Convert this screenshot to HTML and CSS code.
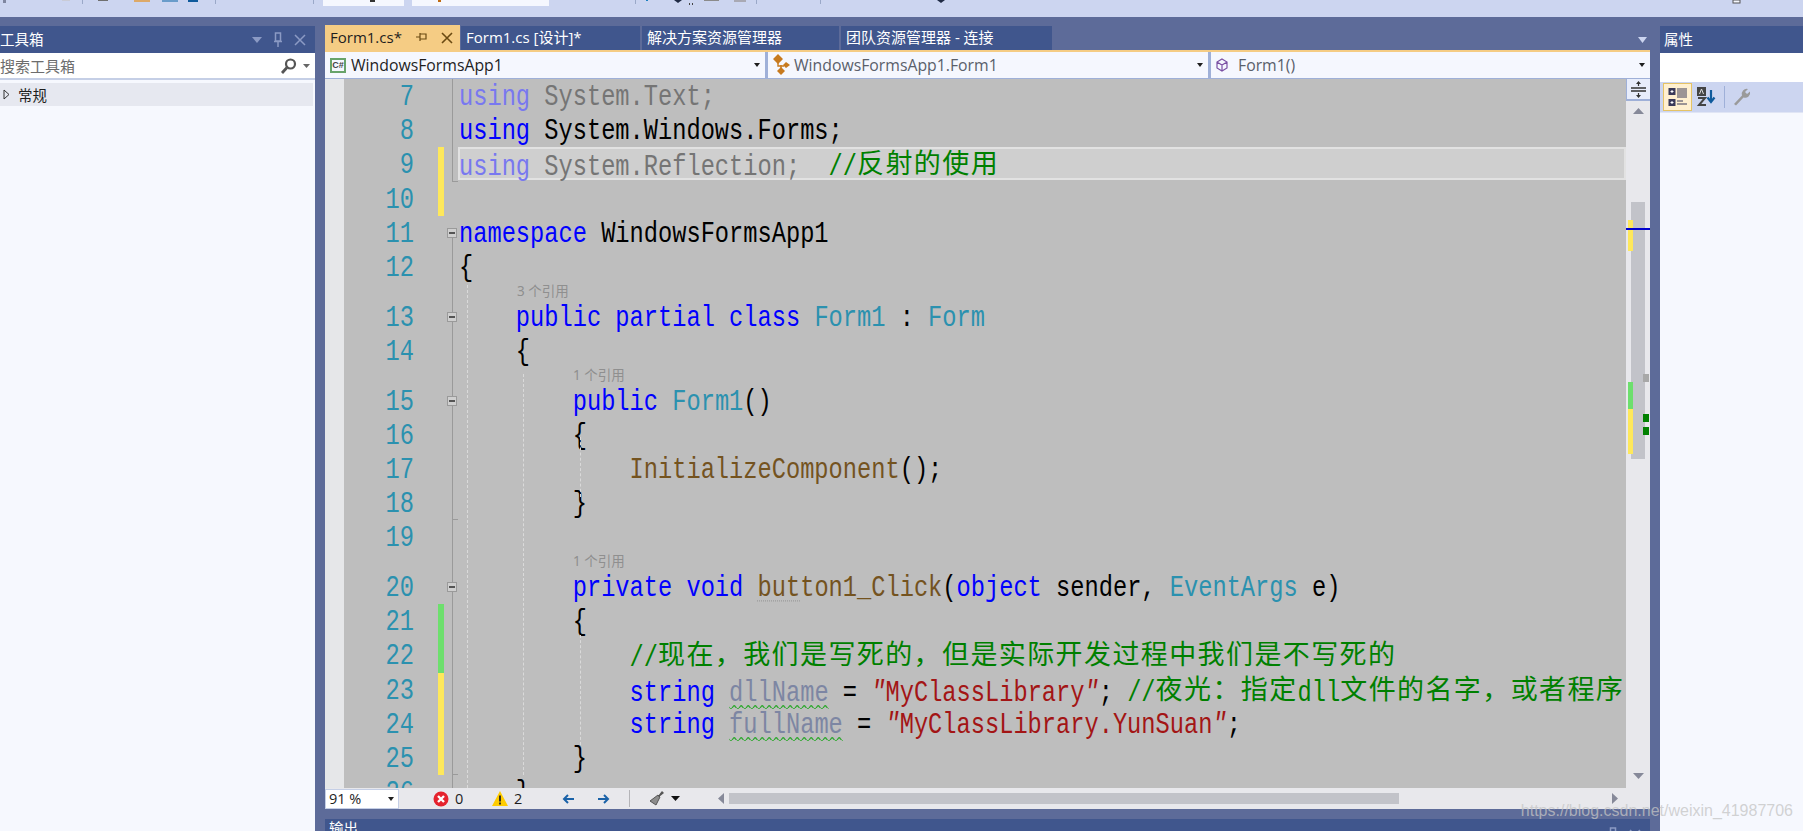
FILE: index.html
```html
<!DOCTYPE html>
<html lang="zh">
<head>
<meta charset="utf-8">
<title>Form1.cs</title>
<link rel="stylesheet" href="styles.css">
</head>
<body>
<header class="toolbar">
  <svg class="toolbar-art" width="1803" height="17" viewBox="0 0 1803 17">
    <rect x="3" y="0" width="3" height="3" fill="#7f86a0"/>
    <rect x="62" y="0" width="8" height="1" fill="#c9cbd6"/>
    <rect x="82" y="0" width="1" height="4" fill="#9aa8c8"/>
    <rect x="98" y="0" width="10" height="1" fill="#6f6f6f"/>
    <rect x="134" y="0" width="16" height="2" fill="#dda968"/>
    <rect x="162" y="0" width="16" height="2" fill="#6a9cca"/>
    <rect x="188" y="0" width="10" height="2" fill="#0e5a9c"/>
    <rect x="215" y="0" width="1" height="4" fill="#9aa8c8"/>
    <rect x="313" y="0" width="1" height="4" fill="#9aa8c8"/>
    <rect x="323" y="0" width="81" height="6" fill="#f5f7fe"/>
    <rect x="370" y="0" width="5" height="2" fill="#333"/>
    <rect x="412" y="0" width="137" height="6" fill="#f5f7fe"/>
    <rect x="438" y="0" width="3" height="2" fill="#c06a10"/>
    <rect x="635" y="0" width="1" height="4" fill="#9aa8c8"/>
    <rect x="646" y="0" width="2" height="1" fill="#1a7fc0"/>
    <polygon points="674,0 682,0 678,3" fill="#1f2a44"/>
    <rect x="689" y="3" width="1" height="2" fill="#444"/>
    <rect x="692" y="3" width="1" height="2" fill="#444"/>
    <rect x="704" y="0" width="15" height="1" fill="#8b8b8b"/>
    <rect x="734" y="0" width="12" height="2" fill="#a9a9b4"/>
    <rect x="756" y="0" width="1" height="4" fill="#9aa8c8"/>
    <rect x="820" y="0" width="1" height="4" fill="#9aa8c8"/>
    <polygon points="937,0 945,0 941,3" fill="#1f2a44"/>
    <rect x="1733" y="0" width="7" height="3" fill="#f5f7fe" stroke="#555"/>
  </svg>
</header>

<main class="workspace">
  <aside class="panel toolbox">
    <div class="panel-head">
      <span class="panel-title">工具箱</span>
      <span class="panel-tools">
        <svg width="10" height="6" viewBox="0 0 10 6"><polygon points="0,0 10,0 5,6" fill="#8b9ac4"/></svg>
        <svg width="10" height="16" viewBox="0 0 10 16"><path d="M2.5 1h5v8h-5zM1 9.500h8M5 10v5" fill="none" stroke="#8b9ac4" stroke-width="1.500"/></svg>
        <svg width="12" height="12" viewBox="0 0 12 12"><path d="M1 1l10 10M11 1L1 11" stroke="#8b9ac4" stroke-width="1.500"/></svg>
      </span>
    </div>
    <div class="search">
      <span class="search-text">搜索工具箱</span>
      <svg width="17" height="16" viewBox="0 0 17 16"><circle cx="10.500" cy="6" r="4.500" fill="none" stroke="#555" stroke-width="2.200"/><path d="M7 9.500L2 15" stroke="#555" stroke-width="2.800"/></svg>
      <svg width="7" height="4" viewBox="0 0 7 4"><polygon points="0,0 7,0 3.500,4" fill="#666"/></svg>
    </div>
    <div class="tree-row">
      <svg width="7" height="11" viewBox="0 0 7 11"><polygon points="1,1 6,5.500 1,10" fill="none" stroke="#333"/></svg>
      <span>常规</span>
    </div>
  </aside>

  <section class="center">
    <nav class="tabs">
      <div class="tab active"><span class="tab-label">Form1.cs*</span>
        <svg width="13" height="11" viewBox="0 0 13 11"><path d="M5 2h6v5H5zM5 1v8M1 5h4" fill="none" stroke="#6b4a12" stroke-width="1.200"/></svg>
        <svg width="12" height="12" viewBox="0 0 12 12"><path d="M1 1l10 10M11 1L1 11" stroke="#6b4a12" stroke-width="1.600"/></svg>
      </div>
      <div class="tab t2">Form1.cs [设计]*</div>
      <div class="tab t3">解决方案资源管理器</div>
      <div class="tab t4">团队资源管理器 - 连接</div>
      <svg class="tabs-more" width="9" height="6" viewBox="0 0 9 6"><polygon points="0,0 9,0 4.500,6" fill="#ccd5f0"/></svg>
    </nav>
    <div class="navbar">
      <div class="combo c1">
        <span class="cs-icon">C#</span>
        <span class="combo-text dark">WindowsFormsApp1</span>
        <span class="combo-arrow"></span>
      </div>
      <div class="combo c2">
        <svg width="18" height="22" viewBox="0 0 18 22"><path d="M0 5l5-5 5 5-5 5zM10 11l3-3 4 3-4 3zM4 17l4-4 4 4-4 4z" fill="#c77a1e"/><path d="M5 9v3h6M8 14V11" fill="none" stroke="#c77a1e" stroke-width="1.400"/></svg>
        <span class="combo-text">WindowsFormsApp1.Form1</span>
        <span class="combo-arrow"></span>
      </div>
      <div class="combo c3">
        <svg width="12" height="14" viewBox="0 0 12 14"><path d="M6 1l5 3v6l-5 3-5-3V4zM1 4l5 3 5-3M6 7v6" fill="none" stroke="#7a4fa3" stroke-width="1.200"/></svg>
        <span class="combo-text">Form1()</span>
        <span class="combo-arrow"></span>
      </div>
    </div>

    <div class="editor">
      <div class="lines">
        <div class="row"><span class="num"><span class="src">7</span></span><span class="bar"></span><span class="fold ln"></span><span class="code"><span class="src"><span class="kf">using</span> <span class="gf">System.Text;</span></span></span></div>
        <div class="row"><span class="num"><span class="src">8</span></span><span class="bar"></span><span class="fold ln"></span><span class="code"><span class="src"><span class="k">using</span> System.Windows.Forms;</span></span></div>
        <div class="row"><span class="num"><span class="src">9</span></span><span class="bar y"></span><span class="fold ln end"></span><span class="code hl"><span class="src"><span class="kf">using</span> <span class="gf">System.Reflection;</span>  <span class="c">//</span></span><span class="cj">反射的使用</span></span></div>
        <div class="row"><span class="num"><span class="src">10</span></span><span class="bar y"></span><span class="fold"></span><span class="code"></span></div>
        <div class="row"><span class="num"><span class="src">11</span></span><span class="bar"></span><span class="fold box below"><i></i></span><span class="code"><span class="src"><span class="k">namespace</span> WindowsFormsApp1</span></span></div>
        <div class="row"><span class="num"><span class="src">12</span></span><span class="bar"></span><span class="fold ln"></span><span class="code"><span class="src">{</span></span></div>
        <div class="row lens-row"><span class="num"></span><span class="bar"></span><span class="fold ln"></span><span class="code lens l1">3 个引用</span></div>
        <div class="row"><span class="num"><span class="src">13</span></span><span class="bar"></span><span class="fold box ln"><i></i></span><span class="code"><span class="src">    <span class="k">public partial class</span> <span class="t">Form1</span> : <span class="t">Form</span></span></span></div>
        <div class="row"><span class="num"><span class="src">14</span></span><span class="bar"></span><span class="fold ln"></span><span class="code"><span class="src">    {</span></span></div>
        <div class="row lens-row"><span class="num"></span><span class="bar"></span><span class="fold ln"></span><span class="code lens l2">1 个引用</span></div>
        <div class="row"><span class="num"><span class="src">15</span></span><span class="bar"></span><span class="fold box ln"><i></i></span><span class="code"><span class="src">        <span class="k">public</span> <span class="t">Form1</span>()</span></span></div>
        <div class="row"><span class="num"><span class="src">16</span></span><span class="bar"></span><span class="fold ln"></span><span class="code"><span class="src">        {</span></span></div>
        <div class="row"><span class="num"><span class="src">17</span></span><span class="bar"></span><span class="fold ln"></span><span class="code"><span class="src">            <span class="m">InitializeComponent</span>();</span></span></div>
        <div class="row"><span class="num"><span class="src">18</span></span><span class="bar"></span><span class="fold ln end"></span><span class="code"><span class="src">        }</span></span></div>
        <div class="row"><span class="num"><span class="src">19</span></span><span class="bar"></span><span class="fold ln"></span><span class="code"></span></div>
        <div class="row lens-row"><span class="num"></span><span class="bar"></span><span class="fold ln"></span><span class="code lens l2">1 个引用</span></div>
        <div class="row"><span class="num"><span class="src">20</span></span><span class="bar"></span><span class="fold box ln"><i></i></span><span class="code"><span class="src">        <span class="k">private void</span> <span class="m"><span class="dots">but</span>ton1_Click</span>(<span class="k">object</span> sender, <span class="t">EventArgs</span> e)</span></span></div>
        <div class="row"><span class="num"><span class="src">21</span></span><span class="bar g"></span><span class="fold ln"></span><span class="code"><span class="src">        {</span></span></div>
        <div class="row"><span class="num"><span class="src">22</span></span><span class="bar g"></span><span class="fold ln"></span><span class="code"><span class="src">            <span class="c">//</span></span><span class="cj">现在，我们是写死的，但是实际开发过程中我们是不写死的</span></span></div>
        <div class="row"><span class="num"><span class="src">23</span></span><span class="bar y"></span><span class="fold ln"></span><span class="code"><span class="src">            <span class="k">string</span> <span class="v">dllName</span> = <span class="s"><i>"</i>MyClassLibrary<i>"</i></span>; <span class="c">//</span></span><span class="cj">夜光：指定</span><span class="src c">dll</span><span class="cj">文件的名字，或者程序</span></span></div>
        <div class="row"><span class="num"><span class="src">24</span></span><span class="bar y"></span><span class="fold ln"></span><span class="code"><span class="src">            <span class="k">string</span> <span class="v">fullName</span> = <span class="s"><i>"</i>MyClassLibrary.YunSuan<i>"</i></span>;</span></span></div>
        <div class="row"><span class="num"><span class="src">25</span></span><span class="bar y"></span><span class="fold ln end"></span><span class="code"><span class="src">        }</span></span></div>
        <div class="row"><span class="num"><span class="src">26</span></span><span class="bar"></span><span class="fold ln"></span><span class="code"><span class="src">    }</span></span></div>
        <span class="guide g1"></span>
        <span class="guide g2"></span>
        <span class="guide g3"></span>
        <span class="guide g4"></span>
      </div>
      <div class="vscroll">
        <div class="splitter">
          <svg width="15" height="17" viewBox="0 0 15 17"><path d="M0 7h15M0 10h15" stroke="#333" stroke-width="1.300"/><path d="M7.500 1v4M7.500 12v4" stroke="#333" stroke-width="1.200"/><path d="M5 3l2.500-3L10 3zM5 14l2.500 3L10 14z" fill="#333"/></svg>
        </div>
        <svg class="scroll-up" width="11" height="6" viewBox="0 0 11 6"><polygon points="0,6 11,6 5.500,0" fill="#868999"/></svg>
        <div class="thumb"></div>
        <span class="mark my1"></span>
        <span class="mark mg"></span>
        <span class="mark my2"></span>
        <span class="caret-line"></span>
        <span class="sq sq-gray"></span>
        <span class="sq sq-g1"></span>
        <span class="sq sq-g2"></span>
        <svg class="scroll-down" width="11" height="6" viewBox="0 0 11 6"><polygon points="0,0 11,0 5.500,6" fill="#868999"/></svg>
      </div>
    </div>

    <div class="status">
      <div class="zoom-box"><span>91 %</span><span class="combo-arrow"></span></div>
      <svg class="st-err" width="16" height="16" viewBox="0 0 16 16"><circle cx="8" cy="8" r="7.500" fill="#e5232e"/><path d="M5 5l6 6M11 5l-6 6" stroke="#fff" stroke-width="2.400"/></svg>
      <span class="st-count">0</span>
      <svg class="st-warn" width="16" height="15" viewBox="0 0 16 15"><polygon points="8,0 16,15 0,15" fill="#ffcc00"/><path d="M8 4.500v6M8 11.500v2" stroke="#222" stroke-width="1.800"/></svg>
      <span class="st-count">2</span>
      <svg class="st-back" width="12" height="10" viewBox="0 0 12 10"><path d="M12 5H2M6 1L2 5l4 4" fill="none" stroke="#1a62a8" stroke-width="2"/></svg>
      <svg class="st-fwd" width="12" height="10" viewBox="0 0 12 10"><path d="M0 5h10M6 1l4 4-4 4" fill="none" stroke="#1a62a8" stroke-width="2"/></svg>
      <span class="st-sep"></span>
      <svg class="st-brush" width="15" height="15" viewBox="0 0 15 15"><path d="M9 4l2 2-4 8-6-4z" fill="#8c8c8c" stroke="#555"/><path d="M9 5l4-5 2 2-5 4z" fill="#555"/></svg>
      <svg class="st-drop" width="9" height="5" viewBox="0 0 9 5"><polygon points="0,0 9,0 4.500,5" fill="#111"/></svg>
      <svg class="st-left" width="6" height="11" viewBox="0 0 6 11"><polygon points="6,0 6,11 0,5.500" fill="#868999"/></svg>
      <div class="hscroll"><span class="hthumb"></span></div>
      <svg class="st-right" width="6" height="11" viewBox="0 0 6 11"><polygon points="0,0 0,11 6,5.500" fill="#868999"/></svg>
      <span class="st-corner"></span>
    </div>

    <div class="output-head">
      <span class="output-title">输出</span>
      <span class="panel-tools">
        <svg width="10" height="6" viewBox="0 0 10 6"><polygon points="0,0 10,0 5,6" fill="#8b9ac4"/></svg>
        <svg width="10" height="16" viewBox="0 0 10 16"><path d="M2.500 1h5v8h-5zM1 9.500h8M5 10v5" fill="none" stroke="#8b9ac4" stroke-width="1.500"/></svg>
        <svg width="12" height="12" viewBox="0 0 12 12"><path d="M1 1l10 10M11 1L1 11" stroke="#8b9ac4" stroke-width="1.500"/></svg>
      </span>
    </div>
  </section>

  <aside class="panel props">
    <div class="panel-head"><span class="panel-title pt-right">属性</span></div>
    <div class="props-blank"></div>
    <div class="props-bar">
      <button class="prop-btn on">
        <svg width="20" height="22" viewBox="0 0 20 22"><rect x="0.500" y="2" width="7" height="7" fill="#3a3a5a"/><rect x="0.500" y="13" width="7" height="7" fill="#3a3a5a"/><path d="M2.500 5.500h3M4 4v3M2.500 16.500h3M4 15v3" stroke="#fff"/><path d="M9 3h10M9 5h10M9 7h10M9 9h10M9 11h10M9 15h6M9 18h10" stroke="#3a3a5a" stroke-width="1.200"/></svg>
      </button>
      <svg class="prop-az" width="20" height="22" viewBox="0 0 20 22"><rect x="1" y="1" width="9" height="9" fill="#444"/><path d="M3.500 8l2-5 2 5" fill="none" stroke="#ddd"/><path d="M2 12h7l-6 7h7" fill="none" stroke="#444" stroke-width="2"/><path d="M15 4v11M11.500 11.500L15 16l3.500-4.500" fill="none" stroke="#0e5a9c" stroke-width="2.200"/></svg>
      <span class="prop-sep"></span>
      <svg class="prop-wrench" width="20" height="20" viewBox="0 0 20 20"><path d="M2 17L10 8.500a5 5 0 0 1 6-6.500l-3 3 2 2 3-2.500a5 5 0 0 1-6.500 6L4 18.500z" fill="#9a9a9a"/></svg>
    </div>
  </aside>
</main>

<div class="watermark">https://blog.csdn.net/weixin_41987706</div>
</body>
</html>
```
FILE: styles.css
```css
* { box-sizing: border-box; }
html, body { margin: 0; padding: 0; }
body {
  position: relative;
  width: 1803px;
  height: 831px;
  overflow: hidden;
  background: #5d6b99;
  font-family: "Open Sans", "Noto Sans CJK SC", sans-serif;
  font-size: 15px;
  color: #1e1e1e;
}

.toolbar { height: 17px; background: #ccd5f0; }
.toolbar-art { display: block; }

.workspace {
  display: flex;
  height: 814px;
  padding-top: 8px;
}

/* side panels */
.panel { background: #f6f8fe; margin-top: 1px; }
.toolbox { width: 315px; flex: none; }
.props { width: 143px; flex: none; margin-left: 10px; }
.panel-head {
  height: 27px;
  background: #40568d;
  color: #fff;
  display: flex;
  align-items: center;
  justify-content: space-between;
}
.panel-title { font-size: 14.500px; line-height: 27px; }
.pt-right { padding-left: 4px; }
.panel-tools {
  display: flex;
  align-items: center;
  gap: 11px;
  padding-right: 9px;
}
.search {
  height: 27px;
  background: #fff;
  border-bottom: 2px solid #c5cfe6;
  display: flex;
  align-items: center;
  padding-right: 5px;
}
.search-text { flex: 1; color: #6d6d6d; font-size: 15px; }
.search svg:last-child { margin-left: 6px; }
.tree-row {
  height: 23px;
  margin: 3px 2px 0 0;
  background: #e6e8f0;
  display: flex;
  align-items: center;
  gap: 8px;
  padding-left: 3px;
  font-size: 14.500px;
}

/* center column */
.center {
  width: 1325px;
  flex: none;
  margin-left: 10px;
  display: flex;
  flex-direction: column;
}
.tabs {
  height: 25px;
  display: flex;
  align-items: flex-end;
  position: relative;
  flex: none;
}
.tab {
  height: 24px;
  background: #40568d;
  color: #fff;
  font-size: 15px;
  line-height: 23px;
  padding-left: 5px;
  margin-right: 2px;
  white-space: nowrap;
}
.tab.active {
  width: 135px;
  height: 25px;
  margin-right: 1px;
  background: #f5cc84;
  color: #1e1e1e;
  display: flex;
  align-items: center;
  gap: 0;
}
.tab-label { width: 85px; flex: none; }
.tab.active svg:last-child { margin-left: 13px; }
.t2 { width: 179px; }
.t3 { width: 197px; }
.t4 { width: 211px; }
.tabs-more { position: absolute; right: 3px; top: 12px; }

.navbar {
  height: 29px;
  flex: none;
  background: #f5f7fe;
  border-top: 2px solid #f5cc84;
  border-bottom: 1px solid #9fb0d8;
  display: flex;
  gap: 3px;
}
.combo {
  display: flex;
  align-items: center;
  height: 26px;
  background: #f5f7fe;
  padding-right: 5px;
  box-shadow: 3px 0 0 #9fb0d8;
}
.c1 { width: 440px; padding-left: 5px; }
.c2 { width: 440px; padding-left: 5px; }
.c3 { flex: 1; padding-left: 5px; box-shadow: none; }
.combo-text { flex: 1; font-size: 15.800px; color: #5a5f6b; padding-left: 5px; white-space: nowrap; }
.combo-text.dark { color: #1e1e1e; }
.c2 .combo-text { padding-left: 3px; }
.c3 .combo-text { padding-left: 10px; }
.combo-arrow {
  width: 0;
  height: 0;
  flex: none;
  border-left: 3.500px solid transparent;
  border-right: 3.500px solid transparent;
  border-top: 4px solid #1e1e1e;
}
.cs-icon {
  width: 16px;
  height: 15px;
  flex: none;
  border: 2px solid #68a36a;
  background: #f5f7fe;
  font-family: "Liberation Sans", sans-serif;
  font-size: 9px;
  font-weight: bold;
  line-height: 11px;
  text-align: center;
  color: #444;
}

/* editor */
.editor {
  height: 709px;
  flex: none;
  display: flex;
  background: #bebebe;
}
.lines {
  position: relative;
  width: 1301px;
  flex: none;
  overflow: hidden;
}
.row {
  display: flex;
  height: 34.200px;
  line-height: 34.200px;
  font-family: "Liberation Mono", "Noto Sans CJK SC", monospace;
  font-size: 23.700px;
  color: #000;
  white-space: pre;
}
.row.lens-row { height: 15.500px; line-height: 15.500px; }
.num {
  width: 89px;
  flex: none;
  text-align: right;
  color: #2b91af;
  background: linear-gradient(to right, #e6e7e9 19px, #bebebe 19px);
}
.bar { width: 6px; margin-left: 24px; flex: none; }
.bar.y { background: #fee85b; }
.bar.g { background: #6ddf6d; }
.fold { width: 14px; flex: none; position: relative; }
.fold.ln::before, .fold.below::before {
  content: "";
  position: absolute;
  left: 8px;
  top: 0;
  bottom: 0;
  width: 1px;
  background: #9a9a9a;
}
.fold.below::before { top: 50%; }
.fold.end::after {
  content: "";
  position: absolute;
  left: 8px;
  bottom: 0;
  width: 6px;
  height: 1px;
  background: #9a9a9a;
}
.fold.box i {
  position: absolute;
  z-index: 1;
  left: 3px;
  top: 12px;
  width: 10px;
  height: 10px;
  background: #cfcfcf;
  border: 1px solid #9a9a9a;
}
.fold.box i::after {
  content: "";
  position: absolute;
  left: 1px;
  top: 3px;
  width: 6px;
  height: 2px;
  background: #555;
}
.code { flex: 1; min-width: 0; padding-left: 1px; }
.hl {
  background: #cfcfcf;
  outline: 2px solid #e2e2e2;
  outline-offset: -2px;
  margin-bottom: 2px;
}

.src {
  display: inline-block;
  transform: translateY(2px) scaleY(1.25);
}
.k { color: #0000ff; }
.kf { color: #7878f0; }
.gf { color: #757575; }
.t { color: #2b91af; }
.m { color: #74531f; }
.c { color: #008000; }
.s { color: #a31515; }
.s i { font-style: italic; }
.v {
  color: #7d86a3;
  text-decoration: underline wavy #2fa82f 1px;
  text-underline-offset: 2px;
}
.dots { text-decoration: underline dotted #9a9a9a 1px; text-underline-offset: 3px; }
.cj {
  position: relative;
  top: 1px;
  font-family: "Noto Sans CJK SC", sans-serif;
  font-size: 27px;
  letter-spacing: 1.400px;
  color: #008000;
  line-height: 1;
}
.lens {
  font-family: "Noto Sans", "Noto Sans CJK SC", sans-serif;
  font-size: 13.500px;
  color: #8f8f8f;
}
.l1 { padding-left: 59px; }
.l2 { padding-left: 115px; }

.guide {
  position: absolute;
  width: 0;
  border-left: 1px dashed #dadada;
}
.g1 { left: 142px; top: 206px; height: 503px; }
.g2 { left: 198px; top: 295px; height: 401px; }
.g3 { left: 255px; top: 358px; height: 60px; }
.g4 { left: 255px; top: 556px; height: 110px; }

/* vertical scrollbar */
.vscroll {
  flex: 1;
  position: relative;
  background: #e8e8ec;
}
.splitter {
  height: 22px;
  background: #e8edfb;
  border-bottom: 2px solid #9fb0d8;
  border-left: 1px solid #9fb0d8;
  display: flex;
  align-items: center;
  justify-content: center;
}
.scroll-up { position: absolute; left: 7px; top: 29px; }
.scroll-down { position: absolute; left: 7px; top: 694px; }
.thumb {
  position: absolute;
  left: 5px;
  top: 123px;
  width: 14px;
  height: 257px;
  background: #c2c3c9;
}
.mark { position: absolute; left: 2px; width: 5px; }
.my1 { top: 141px; height: 31px; background: #fee85b; }
.mg { top: 303px; height: 27px; background: #6ddf6d; }
.my2 { top: 330px; height: 45px; background: #fee85b; }
.caret-line {
  position: absolute;
  left: 0;
  top: 149px;
  width: 24px;
  height: 2px;
  background: #0000cd;
}
.sq { position: absolute; left: 17px; width: 6px; height: 8px; }
.sq-gray { top: 295px; background: #a8a8a8; }
.sq-g1 { top: 335px; background: #008000; }
.sq-g2 { top: 348px; background: #008000; }

/* status strip */
.status {
  height: 21px;
  flex: none;
  background: #e8e8ec;
  display: flex;
  align-items: center;
}
.zoom-box {
  width: 74px;
  height: 20px;
  flex: none;
  background: #fff;
  border: 1px solid #c5cfe6;
  display: flex;
  align-items: center;
  justify-content: space-between;
  padding: 0 4px 0 3px;
  font-size: 14.500px;
}
.st-err { margin-left: 34px; }
.st-count { margin-left: 6px; width: 12px; font-size: 14.500px; }
.st-warn { margin-left: 25px; }
.st-back { margin-left: 36px; }
.st-fwd { margin-left: 24px; }
.st-sep { width: 1px; height: 17px; background: #b4b4b8; margin-left: 19px; }
.st-brush { margin-left: 19px; }
.st-drop { margin-left: 7px; }
.st-left { margin-left: 38px; }
.hscroll { width: 672px; margin-left: 5px; height: 11px; }
.hthumb { display: block; width: 670px; height: 11px; background: #c2c3c9; }
.st-right { margin-left: 211px; }
.st-corner { flex: 1; }

.output-head {
  height: 12px;
  margin-top: 10px;
  flex: none;
  background: #40568d;
  color: #fff;
  display: flex;
  justify-content: space-between;
  align-items: flex-start;
  overflow: hidden;
}
.output-title { font-size: 14.500px; line-height: 20px; padding-left: 4px; margin-top: 0; }
.output-head .panel-tools { padding: 8px 9px 0 0; }

/* properties */
.props-blank { height: 29px; background: #fff; }
.props-bar {
  height: 31px;
  background: #ccd5f0;
  border-bottom: 1px solid #e0e5f5;
  display: flex;
  align-items: center;
  padding-left: 3px;
}
.prop-btn {
  width: 29px;
  height: 28px;
  padding: 0;
  background: #fff0d0;
  border: 1px solid #e5c365;
  display: flex;
  align-items: center;
  justify-content: center;
}
.prop-az { margin-left: 4px; }
.prop-sep { width: 1px; height: 22px; background: #9fb0d8; margin-left: 8px; }
.prop-wrench { margin-left: 7px; }

.watermark {
  position: absolute;
  right: 10px;
  bottom: 10px;
  font-family: "Liberation Sans", sans-serif;
  font-size: 16px;
  line-height: 20px;
  color: rgba(196, 196, 196, 0.75);
  white-space: nowrap;
}
```
